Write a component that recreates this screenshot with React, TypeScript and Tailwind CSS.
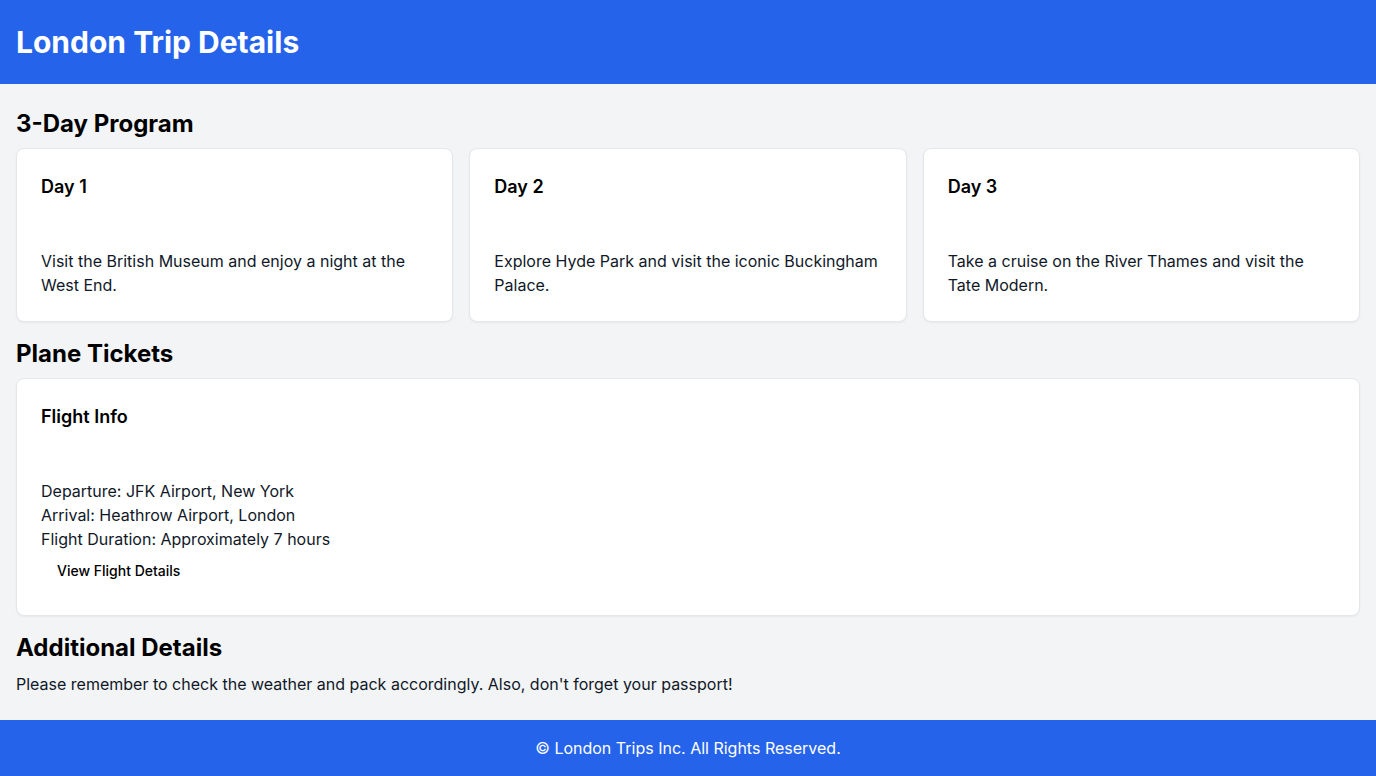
const days = [
  { title: "Day 1", text: "Visit the British Museum and enjoy a night at the West End." },
  { title: "Day 2", text: "Explore Hyde Park and visit the iconic Buckingham Palace." },
  { title: "Day 3", text: "Take a cruise on the River Thames and visit the Tate Modern." },
];

const Card = ({ title, children }: { title: string; children: React.ReactNode }) => {
  return (
    <div className="bg-white rounded-lg border border-gray-200 shadow-xs">
      <div className="p-6">
        <h3 className="text-lg font-semibold">{title}</h3>
      </div>
      <div className="p-6">{children}</div>
    </div>
  );
};

const App = () => {
  return (
    <div className="min-h-screen flex flex-col bg-gray-100 text-black font-['Inter',sans-serif]">
      <header className="bg-[#2563eb] px-4 py-6">
        <h1 className="text-3xl font-bold text-white">London Trip Details</h1>
      </header>
      <main className="flex-1 px-4 py-6 space-y-4">
        <section>
          <h2 className="text-2xl font-bold mb-2">3-Day Program</h2>
          <div className="grid grid-cols-3 gap-4">
            {days.map((d) => (
              <Card key={d.title} title={d.title}>
                <p className="text-base text-gray-900">{d.text}</p>
              </Card>
            ))}
          </div>
        </section>
        <section>
          <h2 className="text-2xl font-bold mb-2">Plane Tickets</h2>
          <Card title="Flight Info">
            <p className="text-base text-gray-900">Departure: JFK Airport, New York</p>
            <p className="text-base text-gray-900">Arrival: Heathrow Airport, London</p>
            <p className="text-base text-gray-900">Flight Duration: Approximately 7 hours</p>
            <button className="h-10 px-4 py-2 text-sm font-medium rounded-md hover:bg-gray-100">
              View Flight Details
            </button>
          </Card>
        </section>
        <section>
          <h2 className="text-2xl font-bold mb-2">Additional Details</h2>
          <p className="text-base text-gray-900">
            Please remember to check the weather and pack accordingly. Also, don't forget your passport!
          </p>
        </section>
      </main>
      <footer className="bg-[#2563eb] p-4 text-center text-white">
        <p>© London Trips Inc. All Rights Reserved.</p>
      </footer>
    </div>
  );
};

export default App;
